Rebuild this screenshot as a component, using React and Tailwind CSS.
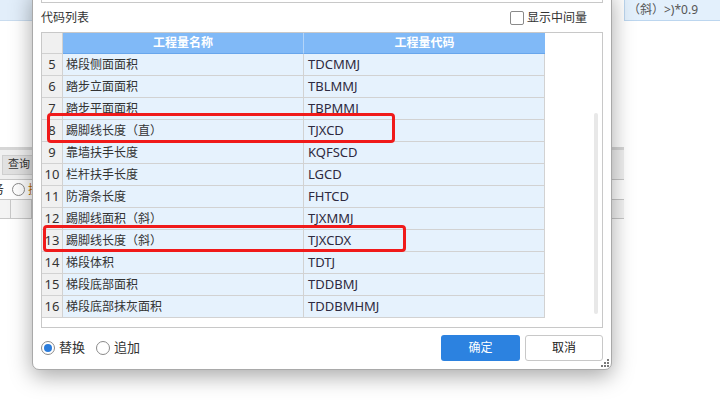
import React from "react";

const rows = [
  ["5", "梯段侧面面积", "TDCMMJ"],
  ["6", "踏步立面面积", "TBLMMJ"],
  ["7", "踏步平面面积", "TBPMMJ"],
  ["8", "踢脚线长度（直）", "TJXCD"],
  ["9", "靠墙扶手长度", "KQFSCD"],
  ["10", "栏杆扶手长度", "LGCD"],
  ["11", "防滑条长度", "FHTCD"],
  ["12", "踢脚线面积（斜）", "TJXMMJ"],
  ["13", "踢脚线长度（斜）", "TJXCDX"],
  ["14", "梯段体积", "TDTJ"],
  ["15", "梯段底部面积", "TDDBMJ"],
  ["16", "梯段底部抹灰面积", "TDDBMHMJ"],
];

function Grip() {
  const dots = [
    [6, 0],
    [3, 3],
    [6, 3],
    [0, 6],
    [3, 6],
    [6, 6],
  ];
  return (
    <svg width="8" height="8" viewBox="0 0 8 8">
      {dots.map(([x, y], i) => (
        <rect key={i} x={x} y={y} width="2" height="2" fill="#7a7a7a" />
      ))}
    </svg>
  );
}

export default function App() {
  return (
    <div className="relative w-[720px] h-[400px] overflow-hidden bg-white font-['Noto_Sans','Noto_Sans_CJK_SC',sans-serif] text-[12px] text-[#333]">
      {/* background application */}
      <div className="flex w-full h-full">
        <div className="w-[624px] flex flex-col">
          <div className="h-[21px] flex">
            <div className="w-[32px] bg-[#e2eefa] border-b border-[#c9dcef]" />
          </div>
          <div className="h-[126px]" />
          <div className="h-[32px] flex items-center bg-[#f0f0f0] border-t-[3px] border-[#d6d6d6]">
            <div className="ml-[2px] h-[20px] pl-[5px] pr-[5px] flex items-center bg-[#e1e1e1] border border-[#cfcfcf] text-[11px] text-[#333]">
              查询
            </div>
          </div>
          <div className="h-[20px] flex items-center border-t border-[#c8c8c8] bg-white">
            <span className="ml-[-8px] text-[#222]">务</span>
            <span className="ml-[8px] w-[13px] h-[13px] rounded-full border border-[#8a8a8a] bg-white" />
            <span className="ml-[3px] text-[#b36b00]">搜</span>
          </div>
          <div className="h-[20px] flex border-t border-b border-[#c8c8c8] bg-[#f4f4f4]">
            <div className="w-[11px] border-r border-[#c8c8c8]" />
            <div className="w-[21px] border-r border-[#c8c8c8]" />
          </div>
        </div>
        <div className="flex-1 flex flex-col">
          <div className="h-[21px] flex items-center pl-[3px] bg-[#e3f0fc] border-l border-[#6ea6e6] border-b border-[#bcd6ef] text-[#555]">
            （斜）&gt;)*0.9
          </div>
        </div>
      </div>

      {/* dialog */}
      <div className="absolute left-[32px] top-[-10px] w-[580px] h-[380px] flex flex-col px-[8px] bg-white border border-[#a9a9a9] rounded-b-[7px] shadow-[0_6px_22px_rgba(0,0,0,0.35)]">
        <div className="h-[12px] border-x border-b border-[#c8c8c8]" />
        <div className="h-[29px] flex items-center justify-between">
          <span className="text-[#333]">代码列表</span>
          <label className="flex items-center gap-[3px] mr-[16px]">
            <span className="w-[14px] h-[14px] border border-[#8a8a8a] rounded-[2px] bg-white" />
            <span>显示中间量</span>
          </label>
        </div>
        <div className="relative h-[296px] border border-[#c8c8c8] bg-white">
          <div className="grid grid-cols-[21px_241px_241px]">
            <div className="h-[21px] bg-[#f0f0f0] border-r border-b border-[#d0d0d0]" />
            <div className="h-[21px] flex items-center justify-center bg-[#80b9f7] border-r border-[#b3d4f8] border-b border-b-[#68a6ec] text-white font-semibold">
              工程量名称
            </div>
            <div className="h-[21px] flex items-center justify-center bg-[#80b9f7] border-b border-[#68a6ec] text-white font-semibold">
              工程量代码
            </div>
            {rows.map(([n, name, code]) => (
              <React.Fragment key={n}>
                <div className="h-[22px] flex items-center justify-center bg-[#f0f0f0] border-r border-b border-[#d2d2d2] text-[13px] text-[#333]">
                  {n}
                </div>
                <div className="h-[22px] flex items-center pl-[3px] bg-[#e6f2fd] border-r border-b border-[#d2d2d2]">
                  {name}
                </div>
                <div className="h-[22px] flex items-center pl-[4px] bg-[#e6f2fd] border-r border-b border-[#d2d2d2] text-[13px] text-[#2e2a40]">
                  {code}
                </div>
              </React.Fragment>
            ))}
          </div>
          <div className="absolute right-[4px] top-[80px] w-[4px] h-[201px] rounded-full bg-[#e8e8e8]" />
        </div>
        <div className="h-[40px] flex items-center">
          <label className="flex items-center">
            <span className="w-[14px] h-[14px] rounded-full border border-[#8a8a8a] flex items-center justify-center">
              <span className="w-[8px] h-[8px] rounded-full bg-[#2b7cdb]" />
            </span>
            <span className="ml-[4px] text-[13px]">替换</span>
          </label>
          <label className="flex items-center ml-[11px]">
            <span className="w-[14px] h-[14px] rounded-full border border-[#8a8a8a]" />
            <span className="ml-[4px] text-[13px]">追加</span>
          </label>
          <div className="ml-auto flex gap-[5px]">
            <button className="w-[79px] h-[26px] rounded-[3px] bg-[#2c82e0] text-white text-[12px]">
              确定
            </button>
            <button className="w-[78px] h-[26px] rounded-[3px] bg-white border border-[#c8c8c8] text-[#222] text-[12px]">
              取消
            </button>
          </div>
        </div>
        <div className="absolute right-[2px] bottom-[2px]">
          <Grip />
        </div>
      </div>

      {/* red highlight marks */}
      <div className="absolute left-[47px] top-[113px] w-[348px] h-[30px] border-[3px] border-[#f01a1a] rounded-[4px]" />
      <div className="absolute left-[43px] top-[225px] w-[363px] h-[27px] border-[3px] border-[#f01a1a] rounded-[4px]" />
    </div>
  );
}
